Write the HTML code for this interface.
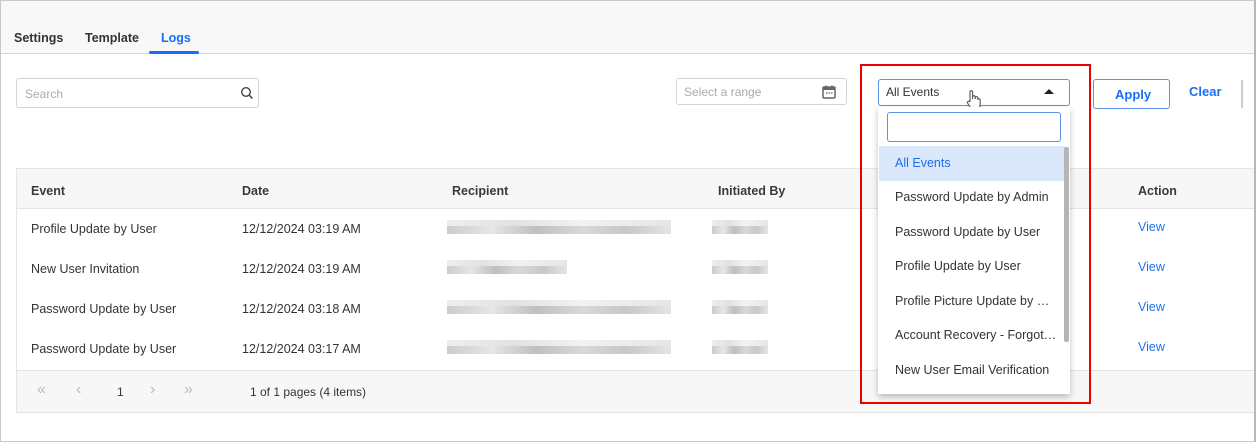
<!DOCTYPE html>
<html><head><meta charset="utf-8"><style>
*{box-sizing:border-box;margin:0;padding:0}
body{width:1256px;height:442px;background:#fff;font-family:"Liberation Sans",sans-serif;color:#333;position:relative;overflow:hidden}
.frame{position:absolute;left:0;top:0;width:1256px;height:442px;border:1px solid #c8c8c8;border-right:2px solid #b8b8b8}
.a{position:absolute}
.top{left:1px;top:1px;width:1253px;height:53px;background:#f8f8f8;border-bottom:1px solid #d6d6d6}
.tab{top:31px;font-size:12.5px;font-weight:bold;color:#333}
.inp{border:1px solid #d4d4d4;border-radius:3px;background:#fff}
.ph{font-size:12px;color:#aaa}
.th{font-size:12.5px;font-weight:bold;color:#3a3a3a;top:184px}
.td{font-size:12.5px;color:#333}
.blur{background:linear-gradient(90deg,#bbb,#ddd 20%,#aaa 40%,#ccc 60%,#b5b5b5 80%,#ddd);height:8px;opacity:.75}
.blur2{background:linear-gradient(90deg,#eee,#e2e2e2 30%,#f2f2f2 60%,#e6e6e6);height:6px}
.view{color:#1a73e8;font-size:12.5px;left:1138px}
.item{left:879px;width:186px;height:34.5px;font-size:12.5px;color:#333;padding-left:16px;line-height:34px}
.pg{font-size:16px;color:#bbb;top:381px}
</style></head><body>
<div class="a top"></div>
<div class="a tab" style="left:14px">Settings</div>
<div class="a tab" style="left:85px">Template</div>
<div class="a tab" style="left:161px;color:#1a6ef5">Logs</div>
<div class="a" style="left:149px;top:51px;width:50px;height:3px;border-radius:2px;background:#1a6ef5"></div>

<div class="a inp" style="left:16px;top:78px;width:243px;height:30px"></div>
<div class="a ph" style="left:25px;top:87px">Search</div>
<svg class="a" style="left:240px;top:86px" width="14" height="14" viewBox="0 0 14 14"><circle cx="6" cy="6" r="4.3" fill="none" stroke="#444" stroke-width="1.4"/><path d="M9.2 9.2L12.5 12.5" stroke="#444" stroke-width="1.5"/></svg>

<div class="a inp" style="left:676px;top:78px;width:171px;height:27px"></div>
<div class="a ph" style="left:684px;top:85px">Select a range</div>
<svg class="a" style="left:821px;top:84px" width="16" height="16" viewBox="0 0 16 16"><rect x="2" y="3" width="12" height="11" rx="1" fill="none" stroke="#666" stroke-width="1.5"/><rect x="2" y="3" width="12" height="3" fill="#666"/><path d="M5 1.5v3M11 1.5v3" stroke="#666" stroke-width="1.5"/><path d="M5 9h1.5M7.5 9h1.5M10 9h1.5" stroke="#666" stroke-width="1.2"/></svg>

<div class="a inp" style="left:878px;top:79px;width:192px;height:27px;border-color:#5b93e8"></div>
<div class="a" style="left:886px;top:85px;font-size:12px;color:#333">All Events</div>
<div class="a" style="left:1044px;top:89px;width:0;height:0;border-left:5px solid transparent;border-right:5px solid transparent;border-bottom:5px solid #222"></div>
<svg class="a" style="left:966px;top:89px" width="16" height="22" viewBox="0 0 16 22"><path d="M4 12V3a1.3 1.3 0 0 1 2.6 0v7V8a1.3 1.3 0 0 1 2.6 0v2V9a1.3 1.3 0 0 1 2.6 0v2a1.2 1.2 0 0 1 2.4 0v5c0 3-2 5-5 5H8c-2 0-3-1-4-3L1.5 14a1.2 1.2 0 0 1 2-1.3z" fill="#fff" stroke="#555" stroke-width="1.1"/></svg>

<div class="a" style="left:1093px;top:79px;width:77px;height:30px;border:1px solid #5b93e8;border-radius:3px"></div>
<div class="a" style="left:1115px;top:87px;font-size:13px;font-weight:bold;color:#1a6ef5">Apply</div>
<div class="a" style="left:1189px;top:84px;font-size:13px;font-weight:bold;color:#1a6ef5">Clear</div>
<div class="a" style="left:1241px;top:80px;width:2px;height:28px;background:#ccc"></div>

<!-- table -->
<div class="a" style="left:16px;top:168px;width:1238px;height:245px;border:1px solid #e4e4e4;border-right:none"></div>
<div class="a" style="left:17px;top:169px;width:1237px;height:40px;background:#f7f7f7;border-bottom:1px solid #e4e4e4"></div>
<div class="a th" style="left:31px">Event</div>
<div class="a th" style="left:242px">Date</div>
<div class="a th" style="left:452px">Recipient</div>
<div class="a th" style="left:718px">Initiated By</div>
<div class="a th" style="left:1138px">Action</div>

<div class="a td" style="left:31px;top:222px">Profile Update by User</div>
<div class="a td" style="left:31px;top:262px">New User Invitation</div>
<div class="a td" style="left:31px;top:302px">Password Update by User</div>
<div class="a td" style="left:31px;top:342px">Password Update by User</div>
<div class="a td" style="left:242px;top:222px">12/12/2024 03:19 AM</div>
<div class="a td" style="left:242px;top:262px">12/12/2024 03:19 AM</div>
<div class="a td" style="left:242px;top:302px">12/12/2024 03:18 AM</div>
<div class="a td" style="left:242px;top:342px">12/12/2024 03:17 AM</div>
<div class="a blur2" style="left:447px;top:220px;width:224px"></div>
<div class="a blur2" style="left:447px;top:260px;width:120px"></div>
<div class="a blur2" style="left:447px;top:300px;width:224px"></div>
<div class="a blur2" style="left:447px;top:340px;width:224px"></div>
<div class="a blur" style="left:447px;top:226px;width:224px"></div>
<div class="a blur" style="left:447px;top:266px;width:120px"></div>
<div class="a blur" style="left:447px;top:306px;width:224px"></div>
<div class="a blur" style="left:447px;top:346px;width:224px"></div>
<div class="a blur2" style="left:712px;top:220px;width:56px"></div>
<div class="a blur2" style="left:712px;top:260px;width:56px"></div>
<div class="a blur2" style="left:712px;top:300px;width:56px"></div>
<div class="a blur2" style="left:712px;top:340px;width:56px"></div>
<div class="a blur" style="left:712px;top:226px;width:56px"></div>
<div class="a blur" style="left:712px;top:266px;width:56px"></div>
<div class="a blur" style="left:712px;top:306px;width:56px"></div>
<div class="a blur" style="left:712px;top:346px;width:56px"></div>
<div class="a view" style="top:220px">View</div>
<div class="a view" style="top:260px">View</div>
<div class="a view" style="top:300px">View</div>
<div class="a view" style="top:340px">View</div>

<div class="a" style="left:17px;top:370px;width:1237px;height:42px;background:#f7f7f7;border-top:1px solid #e4e4e4"></div>
<div class="a pg" style="left:37px">«</div>
<div class="a pg" style="left:76px">‹</div>
<div class="a" style="left:117px;top:385px;font-size:12px;color:#333">1</div>
<div class="a pg" style="left:150px">›</div>
<div class="a pg" style="left:184px">»</div>
<div class="a" style="left:250px;top:385px;font-size:12px;color:#333">1 of 1 pages (4 items)</div>

<!-- dropdown popup -->
<div class="a" style="left:878px;top:107px;width:192px;height:287px;background:#fff;box-shadow:0 3px 6px rgba(0,0,0,.25)"></div>
<div class="a" style="left:887px;top:112px;width:174px;height:30px;border:1px solid #5b93e8;border-radius:3px"></div>
<div class="a item" style="top:146px;background:#dbe8fc;color:#1a6ef5">All Events</div>
<div class="a item" style="top:180px">Password Update by Admin</div>
<div class="a item" style="top:215px">Password Update by User</div>
<div class="a item" style="top:249px">Profile Update by User</div>
<div class="a item" style="top:284px">Profile Picture Update by …</div>
<div class="a item" style="top:318px">Account Recovery - Forgot…</div>
<div class="a item" style="top:353px">New User Email Verification</div>
<div class="a" style="left:1064px;top:147px;width:5px;height:195px;background:#b5b5b5;border-radius:2px"></div>

<div class="a" style="left:860px;top:64px;width:231px;height:340px;border:2px solid #e00"></div>
<div class="frame a"></div>
</body></html>
